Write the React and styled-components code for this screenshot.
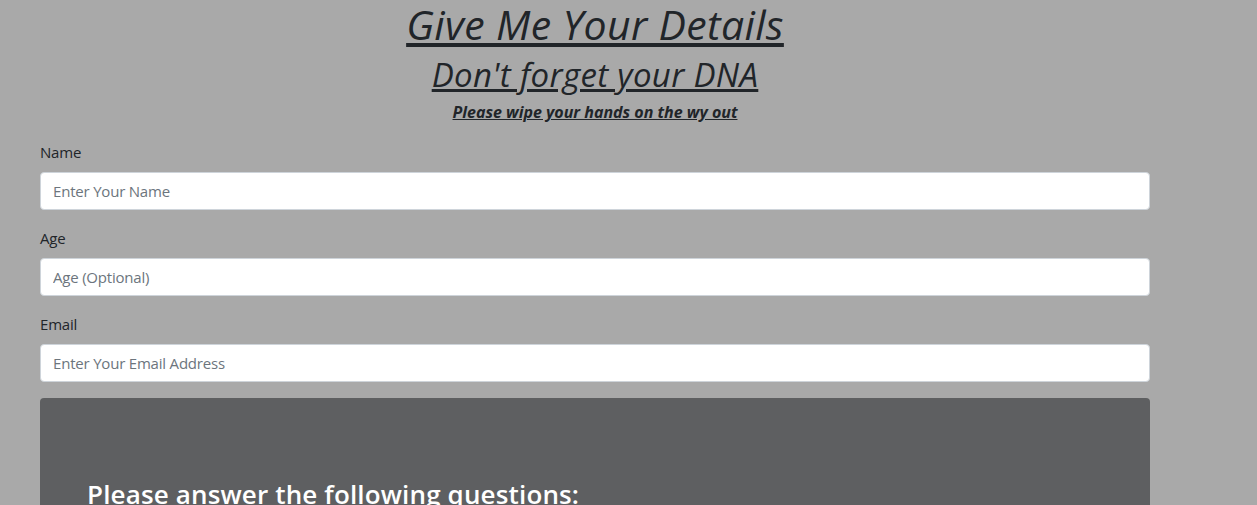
import styled, { createGlobalStyle } from 'styled-components'

const GlobalStyle = createGlobalStyle`
    html, body {
        margin: 0;
        background-color: #a9a9a9;
        font-family: "Open Sans", "Noto Sans", sans-serif;
        color: #212529;
        overflow: hidden;
    }
    * {
        box-sizing: border-box;
    }
`

const fields = [
    { id: 'name', label: 'Name', placeholder: 'Enter Your Name', type: 'text' },
    { id: 'age', label: 'Age', placeholder: 'Age (Optional)', type: 'number' },
    { id: 'email', label: 'Email', placeholder: 'Enter Your Email Address', type: 'email' },
]

const App = () => {
    return (
        <>
            <GlobalStyle />
            <Page>
                <Header>
                    <Title>Give Me Your Details</Title>
                    <SubTitle>Don't forget your DNA</SubTitle>
                    <Note>Please wipe your hands on the wy out</Note>
                </Header>

                <Form onSubmit={e => e.preventDefault()}>
                    {fields.map(field => (
                        <FormGroup key={field.id}>
                            <Label htmlFor={field.id}>{field.label}</Label>
                            <Input
                                id={field.id}
                                type={field.type}
                                placeholder={field.placeholder} />
                        </FormGroup>
                    ))}

                    <Questions>
                        <QuestionsTitle>Please answer the following questions:</QuestionsTitle>
                    </Questions>
                </Form>
            </Page>
        </>
    )
}

export default App

const Page = styled.div`
    width: 1110px;
    margin-left: 40px;
`

const Header = styled.header`
    text-align: center;
    font-style: italic;
    text-decoration: underline;
`

const Title = styled.h1`
    margin: 0 0 8px;
    font-size: 41px;
    line-height: 48px;
    font-weight: 400;
    letter-spacing: 0.35px;
`

const SubTitle = styled.h2`
    margin: 0 0 8px;
    font-size: 33px;
    line-height: 38px;
    font-weight: 400;
    letter-spacing: 0.35px;
`

const Note = styled.h6`
    margin: 0;
    font-size: 16px;
    line-height: 20px;
    font-weight: 700;
`

const Form = styled.form`
    margin-top: 18px;
    display: flex;
    flex-direction: column;
`

const FormGroup = styled.div`
    display: flex;
    flex-direction: column;
    margin-bottom: 16px;
`

const Label = styled.label`
    font-size: 15px;
    line-height: 24px;
    margin-bottom: 8px;
    letter-spacing: -0.2px;
`

const Input = styled.input`
    height: 38px;
    width: 100%;
    padding: 6px 12px;
    font: 15px "Open Sans", sans-serif;
    letter-spacing: -0.2px;
    color: #495057;
    background: #fff;
    border: 1px solid #ced4da;
    border-radius: 4px;
    outline: none;

    &::placeholder {
        color: #6c757d;
    }
`

const Questions = styled.section`
    background-color: #5e5f61;
    border-radius: 4px;
    padding: 78px 47px 64px;
    min-height: 200px;
`

const QuestionsTitle = styled.h3`
    margin: 0;
    color: #fff;
    font-size: 26px;
    line-height: 36px;
    font-weight: 600;
    letter-spacing: 0.15px;
`
